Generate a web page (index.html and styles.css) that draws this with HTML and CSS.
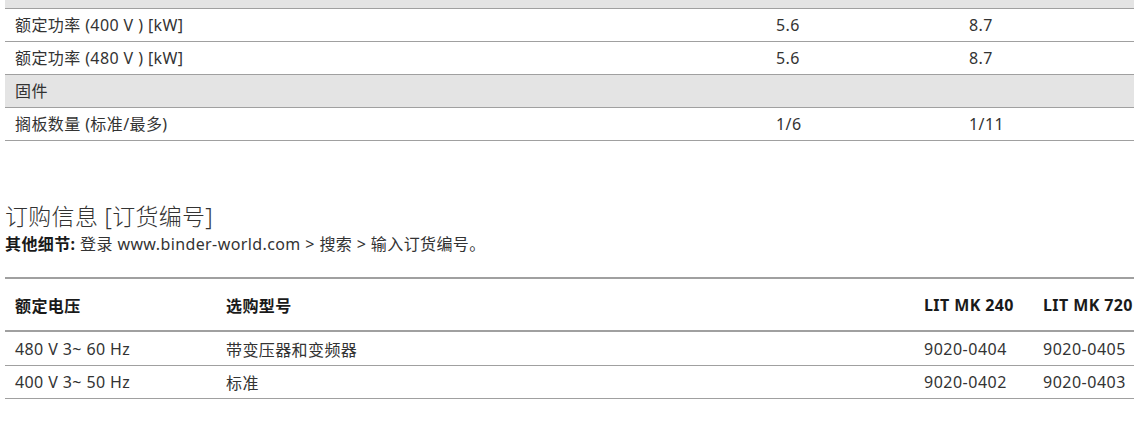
FILE: index.html
```html
<!DOCTYPE html>
<html lang="zh-CN">
<head>
<meta charset="utf-8">
<title>订购信息</title>
<link rel="stylesheet" href="styles.css">
</head>
<body>
<table class="spec">
  <colgroup><col class="c-label"><col class="c-v1"><col class="c-v2"></colgroup>
  <tbody>
    <tr class="section cut"><td colspan="3"></td></tr>
    <tr><td>额定功率 (400 V ) [kW]</td><td>5.6</td><td>8.7</td></tr>
    <tr><td>额定功率 (480 V ) [kW]</td><td>5.6</td><td>8.7</td></tr>
    <tr class="section"><td colspan="3">固件</td></tr>
    <tr><td>搁板数量 (标准/最多)</td><td>1/6</td><td>1/11</td></tr>
  </tbody>
</table>

<h2 class="title">订购信息 [订货编号]</h2>
<p class="note"><strong>其他细节:</strong> 登录 www.binder-world.com &gt; 搜索 &gt; 输入订货编号。</p>

<table class="order">
  <colgroup><col class="o1"><col class="o2"><col class="o3"><col class="o4"></colgroup>
  <thead>
    <tr><th>额定电压</th><th>选购型号</th><th>LIT MK 240</th><th>LIT MK 720</th></tr>
  </thead>
  <tbody>
    <tr><td>480 V 3~ 60 Hz</td><td>带变压器和变频器</td><td>9020-0404</td><td>9020-0405</td></tr>
    <tr><td>400 V 3~ 50 Hz</td><td>标准</td><td>9020-0402</td><td>9020-0403</td></tr>
  </tbody>
</table>
</body>
</html>
```

FILE: styles.css
```css
html, body {
  margin: 0;
  padding: 0;
  background: #ffffff;
}
body {
  padding-left: 5px;
  font-family: "Noto Sans", "Noto Sans CJK SC", sans-serif;
  font-size: 16px;
  letter-spacing: 0.4px;
  color: #333333;
  overflow: hidden;
}
table {
  border-collapse: collapse;
  table-layout: fixed;
  width: 100%;
}
.spec .c-label { width: 761px; }
.spec .c-v1 { width: 193px; }
.spec td {
  height: 32px;
  padding: 0 10px;
  border-bottom: 1px solid #a0a0a0;
  line-height: 20px;
  vertical-align: middle;
  white-space: nowrap;
}
.spec .section td {
  background: #e4e4e4;
}
.spec .cut td {
  height: 8px;
  padding: 0;
}
.title {
  margin: 61px 0 0;
  font-size: 23px;
  font-weight: 300;
  letter-spacing: 0.3px;
  line-height: 28px;
  color: #333333;
}
.note {
  margin: 2px 0 0;
  line-height: 24px;
  font-size: 16px;
}
.note strong {
  color: #1a1a1a;
  font-weight: 700;
}
.order {
  margin-top: 21px;
  border-top: 2px solid #a0a0a0;
}
.order .o1 { width: 211px; }
.order .o2 { width: 698px; }
.order .o3 { width: 119px; }
.order .o4 { width: 101px; }
.order th {
  height: 51px;
  padding: 0 10px;
  text-align: left;
  font-weight: 700;
  color: #1a1a1a;
  border-bottom: 2px solid #a0a0a0;
  white-space: nowrap;
  vertical-align: middle;
}
.order td {
  height: 32px;
  padding: 0 10px;
  border-bottom: 1px solid #a0a0a0;
  white-space: nowrap;
  vertical-align: middle;
}
.order tbody tr:first-child td {
  height: 33px;
}
.order th:nth-child(4), .order td:nth-child(4) {
  padding-right: 0;
}
.order td:nth-child(3), .order td:nth-child(4) {
  letter-spacing: 0.5px;
}
```
